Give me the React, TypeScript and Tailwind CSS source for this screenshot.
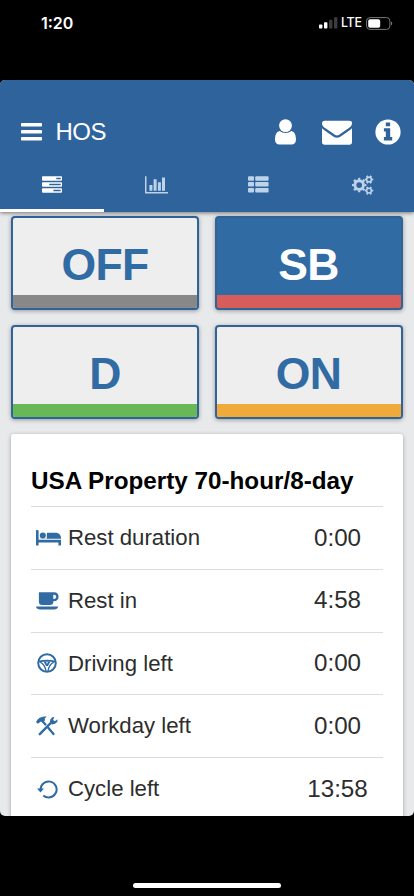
import type { ReactNode } from "react";

const MenuIcon = () => (
  <svg width="21" height="18" viewBox="0 0 21 18" fill="currentColor">
    <rect y="0" width="21" height="3.6" rx="0.8" />
    <rect y="7" width="21" height="3.6" rx="0.8" />
    <rect y="14" width="21" height="3.6" rx="0.8" />
  </svg>
);

const UserIcon = () => (
  <svg width="21" height="26" viewBox="0 0 21 26" fill="currentColor">
    <path d="M4.6 11.9C1.4 12.6 0 16 0 20.5C0 23.8 1.8 25.6 4.5 25.6H16.5C19.2 25.6 21 23.8 21 20.5C21 16 19.6 12.6 16.4 11.9C14.8 13.2 12.8 13.9 10.5 13.9S6.2 13.2 4.6 11.9Z" />
    <circle cx="10.5" cy="6.6" r="6.4" />
  </svg>
);

const MailIcon = () => (
  <svg width="30" height="25" viewBox="0 0 30 25" fill="currentColor">
    <path d="M0 3.4Q0 .8 2.7.8H27.3Q30 .8 30 3.2C30 5.4 28.4 7 26.5 8.3L18.5 13.8C17.3 14.7 16.2 15.4 15 15.4S12.7 14.7 11.5 13.8L3.5 8.3C1.7 7.1 0 5.3 0 3.4Z" />
    <path d="M0 8.3C.5 8.9 1.1 9.4 1.7 9.8L10.2 15.7C11.7 16.8 13.1 17.7 15 17.7S18.3 16.8 19.8 15.7L28.3 9.8C28.9 9.4 29.5 8.9 30 8.3V22Q30 24.7 27.3 24.7H2.7Q0 24.7 0 22Z" />
  </svg>
);

const InfoIcon = () => (
  <svg width="26" height="26" viewBox="0 0 26 26">
    <circle cx="13" cy="13" r="12.6" fill="white" />
    <path d="M10.8 3.5H15.1V7.2H10.8ZM8.9 9.2H15.2V18H17.2V21.4H8.9V18H10.8V12.6H8.9Z" fill="#2f639b" />
  </svg>
);

const TasksIcon = () => (
  <svg width="20" height="18" viewBox="0 0 20 18">
    <g fill="white">
      <rect y="0.2" width="20" height="4.6" rx="0.8" />
      <rect y="6.2" width="20" height="4.6" rx="0.8" />
      <rect y="12.2" width="20" height="4.6" rx="0.8" />
    </g>
    <path d="M14.3 1.8H18.7V3.2H14.3ZM7.2 7.8H18.7V9.2H7.2ZM11.4 13.8H18.7V15.2H11.4Z" fill="#2f639b" />
  </svg>
);

const ChartIcon = () => (
  <svg className="relative left-[1px]" width="23" height="18" viewBox="0 0 23 18" fill="currentColor">
    <path d="M0 .2H1.5V16.1H23V17.6H0ZM4.4 9H7.4V14.7H4.4ZM8.6 3.2H11.6V14.7H8.6ZM12.9 6.2H15.9V14.7H12.9ZM17 1.5H20V14.7H17Z" />
  </svg>
);

const ListIcon = () => (
  <svg width="21" height="17" viewBox="0 0 21 17" fill="currentColor">
    {[0.2, 6.1, 12].map((y) => (
      <g key={y}>
        <rect y={y} width="6" height="4.5" rx="1" />
        <rect x="7.2" y={y} width="13.4" height="4.5" rx="1" />
      </g>
    ))}
  </svg>
);

const CogsIcon = () => (
  <svg className="relative left-[1px]" width="22" height="20" viewBox="0 0 22 20" fill="none" stroke="currentColor">
    <circle cx="7.2" cy="10.1" r="4.3" strokeWidth="2.9" />
    <circle cx="7.2" cy="10.1" r="6.2" strokeWidth="2.1" pathLength="80" strokeDasharray="4.6 5.4" strokeDashoffset="2.3" />
    {[4.5, 15.6].map((y) => (
      <g key={y}>
        <circle cx="17" cy={y} r="2.4" strokeWidth="1.6" />
        <circle cx="17" cy={y} r="3.6" strokeWidth="1.4" pathLength="60" strokeDasharray="4.8 5.2" strokeDashoffset="2.4" />
      </g>
    ))}
  </svg>
);

const BedIcon = () => (
  <svg width="26" height="18" viewBox="0 0 26 18" fill="currentColor">
    <path d="M0 1.8Q0 1 .8 1H1.8Q2.6 1 2.6 1.8V10.8H25V16.6H22.4V13.4H2.6V16.6H0Z" />
    <circle cx="6.8" cy="6.6" r="3" />
    <path d="M10.8 4.4Q10.8 3.8 11.5 3.8H19.5C22.8 3.8 25 6 25 9.2V9.8H3.4V9.6H10.8Z" />
  </svg>
);

const CupIcon = () => (
  <svg width="23" height="18" viewBox="0 0 23 18" fill="currentColor">
    <path
      fillRule="evenodd"
      d="M2.9.3H18C21 .3 22.6 2.3 22.6 4.8S20.7 9.3 18 9.3H17.3V10Q17.3 13 14 13H6.2Q2.9 13 2.9 10ZM17.3 2.7V6.9H17.9C19.3 6.9 20.2 6.1 20.2 4.8S19.3 2.7 17.9 2.7Z"
    />
    <path d="M0 14.6H22.2C22 16.5 20 17.5 18 17.5H4.2C2 17.5 .2 16.5 0 14.6Z" />
  </svg>
);

const WheelIcon = () => (
  <svg className="ml-[1px]" width="20" height="20" viewBox="0 0 20 20">
    <circle cx="10" cy="10" r="8.8" fill="none" stroke="currentColor" strokeWidth="2" />
    <path d="M1.5 8.7C6 7.6 14 7.6 18.5 8.7" fill="none" stroke="currentColor" strokeWidth="1.8" />
    <path d="M3.2 9.2C6 10.6 8.2 13.4 9 18M16.8 9.2C14 10.6 11.8 13.4 11 18" fill="none" stroke="currentColor" strokeWidth="1.3" />
    <path d="M6.5 8.5H13.5L10.9 13H9.1Z" fill="currentColor" />
    <circle cx="10" cy="9.7" r="0.8" fill="white" />
  </svg>
);

const ToolsIcon = () => (
  <svg width="22" height="20" viewBox="0 0 22 20">
    <path fill="currentColor" d="M0 6.1C1.8 2.3 4.9 .1 9.5.5L10.8 .6L8.7 2.5L9 4.2L6.7 6.5L5 5.5L1.8 7.8Z" />
    <path d="M6.6 5.3L9.4 8.5M12.2 11.7L17.5 18" stroke="currentColor" strokeWidth="2.3" strokeLinecap="round" />
    <path d="M3.8 18.2L15.6 6.2" stroke="currentColor" strokeWidth="2.4" strokeLinecap="round" />
    <path
      d="M18.4 .8L16 1.5L14.2 3.8L14 6.8L16 8.4L19 7.8L21.4 5.7V3.2L18.9 5.3L17.1 4Z"
      fill="currentColor"
    />
  </svg>
);

const CycleIcon = () => (
  <svg className="ml-[0.5px]" width="22" height="20" viewBox="0 0 22 20">
    <path d="M3.6 10.6A8 8 0 1 1 6.3 16.4" fill="none" stroke="currentColor" strokeWidth="2" />
    <path d="M0 9.6H7L3.5 13.4Z" fill="currentColor" />
  </svg>
);

const tabs: ReactNode[] = [<TasksIcon />, <ChartIcon />, <ListIcon />, <CogsIcon />];

const statuses = [
  { label: "OFF", face: "bg-[#eeeeee] text-[#306ba4]", strip: "bg-[#888888]" },
  { label: "SB", face: "bg-[#306ba4] text-white", strip: "bg-[#d75d5a]" },
  { label: "D", face: "bg-[#eeeeee] text-[#306ba4]", strip: "bg-[#69b857]" },
  { label: "ON", face: "bg-[#eeeeee] text-[#306ba4]", strip: "bg-[#f0a93b]" },
];

const rows: { label: string; value: string; icon: ReactNode }[] = [
  { label: "Rest duration", value: "0:00", icon: <BedIcon /> },
  { label: "Rest in", value: "4:58", icon: <CupIcon /> },
  { label: "Driving left", value: "0:00", icon: <WheelIcon /> },
  { label: "Workday left", value: "0:00", icon: <ToolsIcon /> },
  { label: "Cycle left", value: "13:58", icon: <CycleIcon /> },
];

function StatusBar() {
  return (
    <div className="flex h-20 items-start justify-between pl-[41px] pr-[21px] pt-[13px] text-white">
      <span className="font-['Inter',sans-serif] text-[16px] font-semibold leading-5">1:20</span>
      <div className="flex h-5 items-center">
        <svg width="19" height="12" viewBox="0 0 19 12" fill="white">
          <rect x="0" y="7.5" width="3.4" height="4" rx="0.8" />
          <rect x="5" y="5.3" width="3.4" height="6.2" rx="0.8" />
          <rect x="10" y="2.7" width="3.4" height="8.8" rx="0.8" fill="#3c3c3c" />
          <rect x="15" y="0.3" width="3.4" height="11.2" rx="0.8" fill="#3c3c3c" />
        </svg>
        <span className="ml-[3px] w-[21px] font-['Inter',sans-serif] text-[12.5px] font-medium leading-5 tracking-[-0.3px]">
          LTE
        </span>
        <svg className="ml-[4px]" width="27" height="13" viewBox="0 0 27 13">
          <rect x="0.6" y="0.6" width="23.3" height="11.8" rx="3.4" fill="none" stroke="#777" strokeWidth="1" />
          <rect x="2.2" y="2.2" width="12" height="8.6" rx="1.8" fill="white" />
          <path d="M25 4.5C26.6 5.2 26.6 7.8 25 8.5Z" fill="#777" />
        </svg>
      </div>
    </div>
  );
}

export default function App() {
  return (
    <div className="flex h-[896px] w-[414px] flex-col overflow-hidden bg-black font-['Liberation_Sans',Arial,sans-serif]">
      <StatusBar />
      <div className="flex h-[736px] flex-col overflow-hidden rounded-[5px] bg-[#e8e9eb]">
        <header className="z-10 h-[132px] shrink-0 bg-[#2f639b] text-white shadow-[0_1px_4px_rgba(0,0,0,0.5)]">
          <div className="flex h-[78px] items-end pb-[13px] pl-[21px] pr-[13px]">
            <div className="flex h-[26px] items-center">
              <MenuIcon />
              <span className="ml-[13.5px] text-[24px] leading-[26px] tracking-[-0.5px]">HOS</span>
            </div>
            <div className="ml-auto flex items-center">
              <UserIcon />
              <span className="ml-[26px] mr-[23px]">
                <MailIcon />
              </span>
              <InfoIcon />
            </div>
          </div>
          <nav className="grid h-[54px] grid-cols-4">
            {tabs.map((icon, i) => (
              <div
                key={i}
                className={
                  i === 0
                    ? "flex items-center justify-center border-b-[3px] border-white pt-[2px]"
                    : "flex items-center justify-center border-b-[3px] border-transparent pt-[2px] text-[#bdd3ea]"
                }
              >
                {icon}
              </div>
            ))}
          </nav>
        </header>
        <main className="pl-[11px] pr-[11.5px] pt-[4px]">
          <div className="grid grid-cols-2 gap-x-[15.5px] gap-y-[15px]">
            {statuses.map((s) => (
              <button
                key={s.label}
                className={`flex h-[94px] flex-col overflow-hidden rounded-[4px] border-2 border-[#306499] shadow-[0_1px_4px_rgba(0,0,0,0.35)] ${s.face}`}
              >
                <span className="flex w-full flex-1 items-center justify-center pt-[17px] text-[44.5px] font-bold leading-none tracking-[-0.6px]">
                  {s.label}
                </span>
                <span className={`h-[13px] w-full shrink-0 ${s.strip}`} />
              </button>
            ))}
          </div>
          <section className="mt-[15px] h-[420px] rounded-[3px] bg-white px-5 pt-[28.5px] shadow-[0_1px_4px_rgba(0,0,0,0.3)]">
            <h1 className="h-[43.5px] whitespace-nowrap text-[24.25px] font-bold leading-[36px] text-black">
              USA Property 70-hour/8-day
            </h1>
            {rows.map((r) => (
              <div key={r.label} className="flex h-[62.75px] items-center border-t-[1.5px] border-[#dcdcde] text-[#2d2d2d]">
                <span className="flex w-[37px] shrink-0 items-center pl-[5px] text-[#306ba4]">{r.icon}</span>
                <span className="text-[22.2px]">{r.label}</span>
                <span className="ml-auto w-[90px] text-center text-[24.2px]">{r.value}</span>
              </div>
            ))}
          </section>
        </main>
      </div>
      <div className="mx-auto mt-[66.5px] h-[5px] w-[148px] rounded-full bg-white" />
    </div>
  );
}
